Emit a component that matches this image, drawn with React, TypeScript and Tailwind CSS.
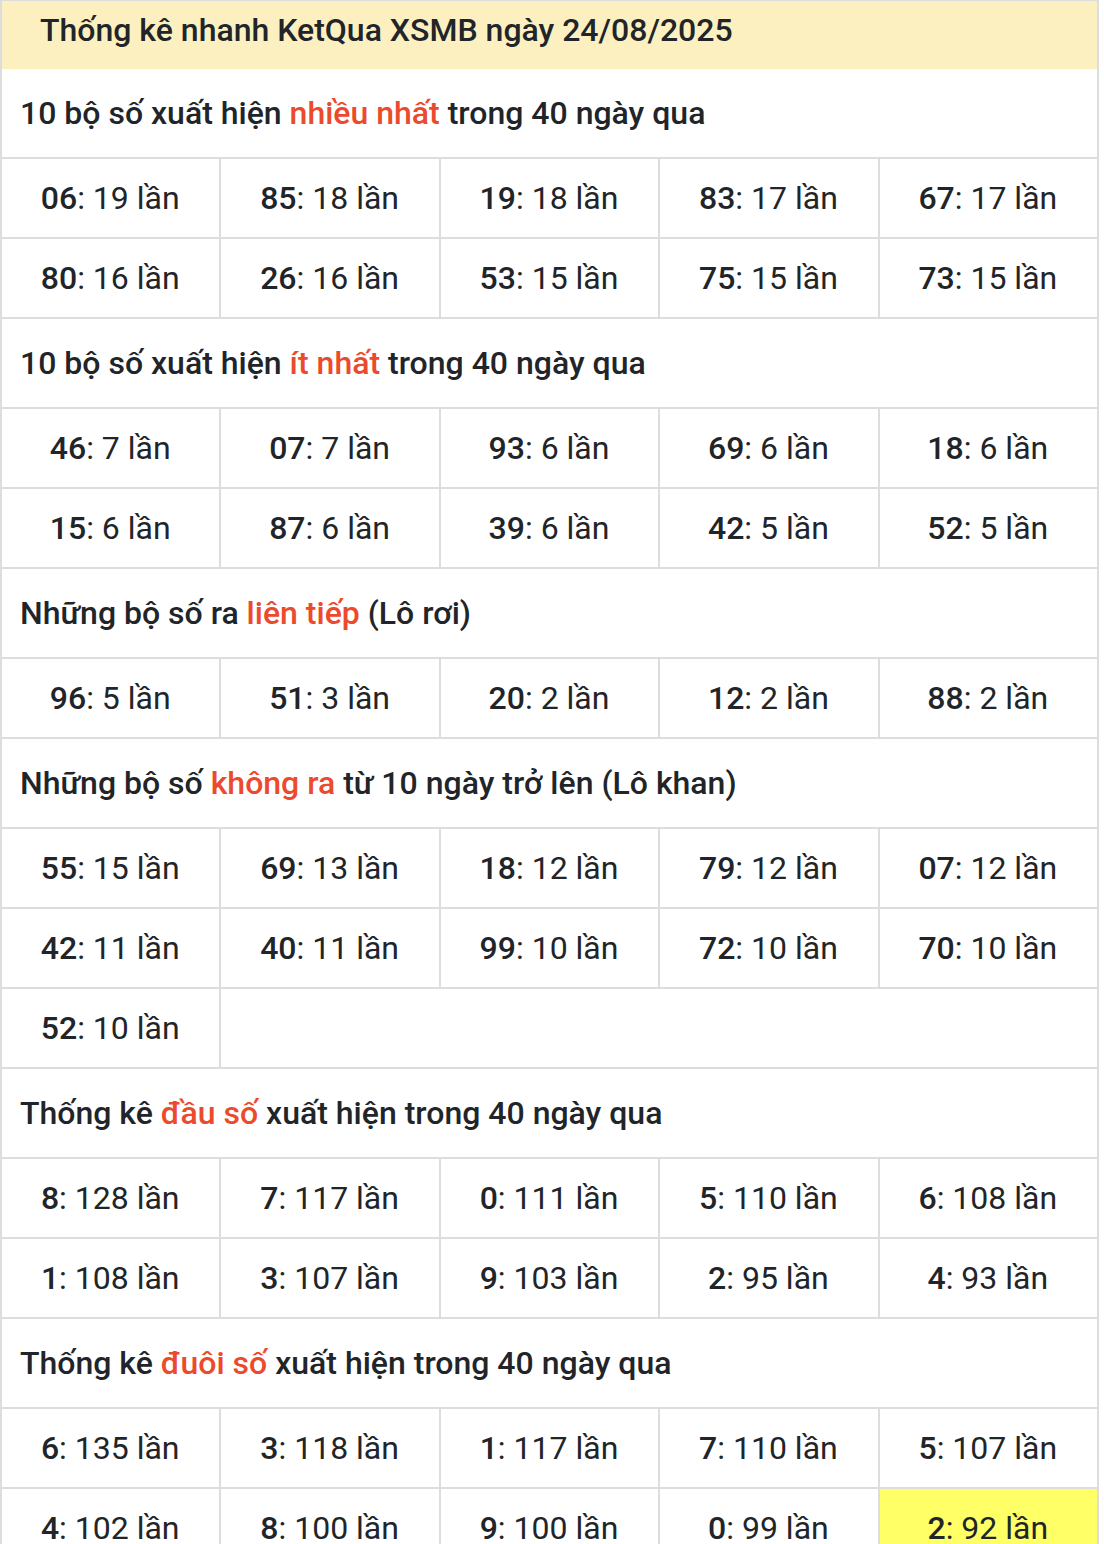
import React from "react";

type Section = {
    before: string;
    hl: string;
    after: string;
    cells: [string, string][];
};

const sections: Section[] = [
    {
        before: "10 bộ số xuất hiện ",
        hl: "nhiều nhất",
        after: " trong 40 ngày qua",
        cells: [
            ["06", "19"], ["85", "18"], ["19", "18"], ["83", "17"], ["67", "17"],
            ["80", "16"], ["26", "16"], ["53", "15"], ["75", "15"], ["73", "15"],
        ],
    },
    {
        before: "10 bộ số xuất hiện ",
        hl: "ít nhất",
        after: " trong 40 ngày qua",
        cells: [
            ["46", "7"], ["07", "7"], ["93", "6"], ["69", "6"], ["18", "6"],
            ["15", "6"], ["87", "6"], ["39", "6"], ["42", "5"], ["52", "5"],
        ],
    },
    {
        before: "Những bộ số ra ",
        hl: "liên tiếp",
        after: " (Lô rơi)",
        cells: [["96", "5"], ["51", "3"], ["20", "2"], ["12", "2"], ["88", "2"]],
    },
    {
        before: "Những bộ số ",
        hl: "không ra",
        after: " từ 10 ngày trở lên (Lô khan)",
        cells: [
            ["55", "15"], ["69", "13"], ["18", "12"], ["79", "12"], ["07", "12"],
            ["42", "11"], ["40", "11"], ["99", "10"], ["72", "10"], ["70", "10"],
            ["52", "10"],
        ],
    },
    {
        before: "Thống kê ",
        hl: "đầu số",
        after: " xuất hiện trong 40 ngày qua",
        cells: [
            ["8", "128"], ["7", "117"], ["0", "111"], ["5", "110"], ["6", "108"],
            ["1", "108"], ["3", "107"], ["9", "103"], ["2", "95"], ["4", "93"],
        ],
    },
    {
        before: "Thống kê ",
        hl: "đuôi số",
        after: " xuất hiện trong 40 ngày qua",
        cells: [
            ["6", "135"], ["3", "118"], ["1", "117"], ["7", "110"], ["5", "107"],
            ["4", "102"], ["8", "100"], ["9", "100"], ["0", "99"], ["2", "92"],
        ],
    },
];

const App = () => {
    return (
        <div className="w-[1104px] min-h-[1544px] bg-white font-['Roboto','Liberation_Sans',sans-serif] text-[#212529]">
            <div className="w-[1099px] border-l-2 border-[#dddddd]">
                {/* header bar */}
                <div className="flex h-[69px] items-center border-t border-r-2 border-[#dddddd] bg-[#fcf0c0] pl-[38px] pb-[11px] text-[32px] font-medium">
                    Thống kê nhanh KetQua XSMB ngày 24/08/2025
                </div>

                {sections.map((s, si) => {
                    const isLast = si === sections.length - 1;
                    const rest = s.cells.length % 5;
                    return (
                        <div key={si}>
                            <div className="flex h-[90px] items-center border-r-2 border-b-2 border-[#dddddd] pl-[18px] text-[32px] font-medium">
                                <span>
                                    {s.before}
                                    <span className="text-[#ec4a2c]">{s.hl}</span>
                                    {s.after}
                                </span>
                            </div>
                            <div className="grid grid-cols-5">
                                {s.cells.map(([n, c], i) => (
                                    <div
                                        key={i}
                                        className={
                                            "flex h-[80px] items-center justify-center border-r-2 border-b-2 border-[#dddddd] pr-[1px] text-[32px] " +
                                            (isLast && i === s.cells.length - 1 ? "bg-[#ffff66]" : "")
                                        }
                                    >
                                        <span>
                                            <span className="font-medium">{n}</span>: {c} lần
                                        </span>
                                    </div>
                                ))}
                                {rest > 0 && (
                                    <div className="col-span-4 h-[80px] border-r-2 border-b-2 border-[#dddddd]" />
                                )}
                            </div>
                        </div>
                    );
                })}
            </div>
        </div>
    );
};

export default App;
